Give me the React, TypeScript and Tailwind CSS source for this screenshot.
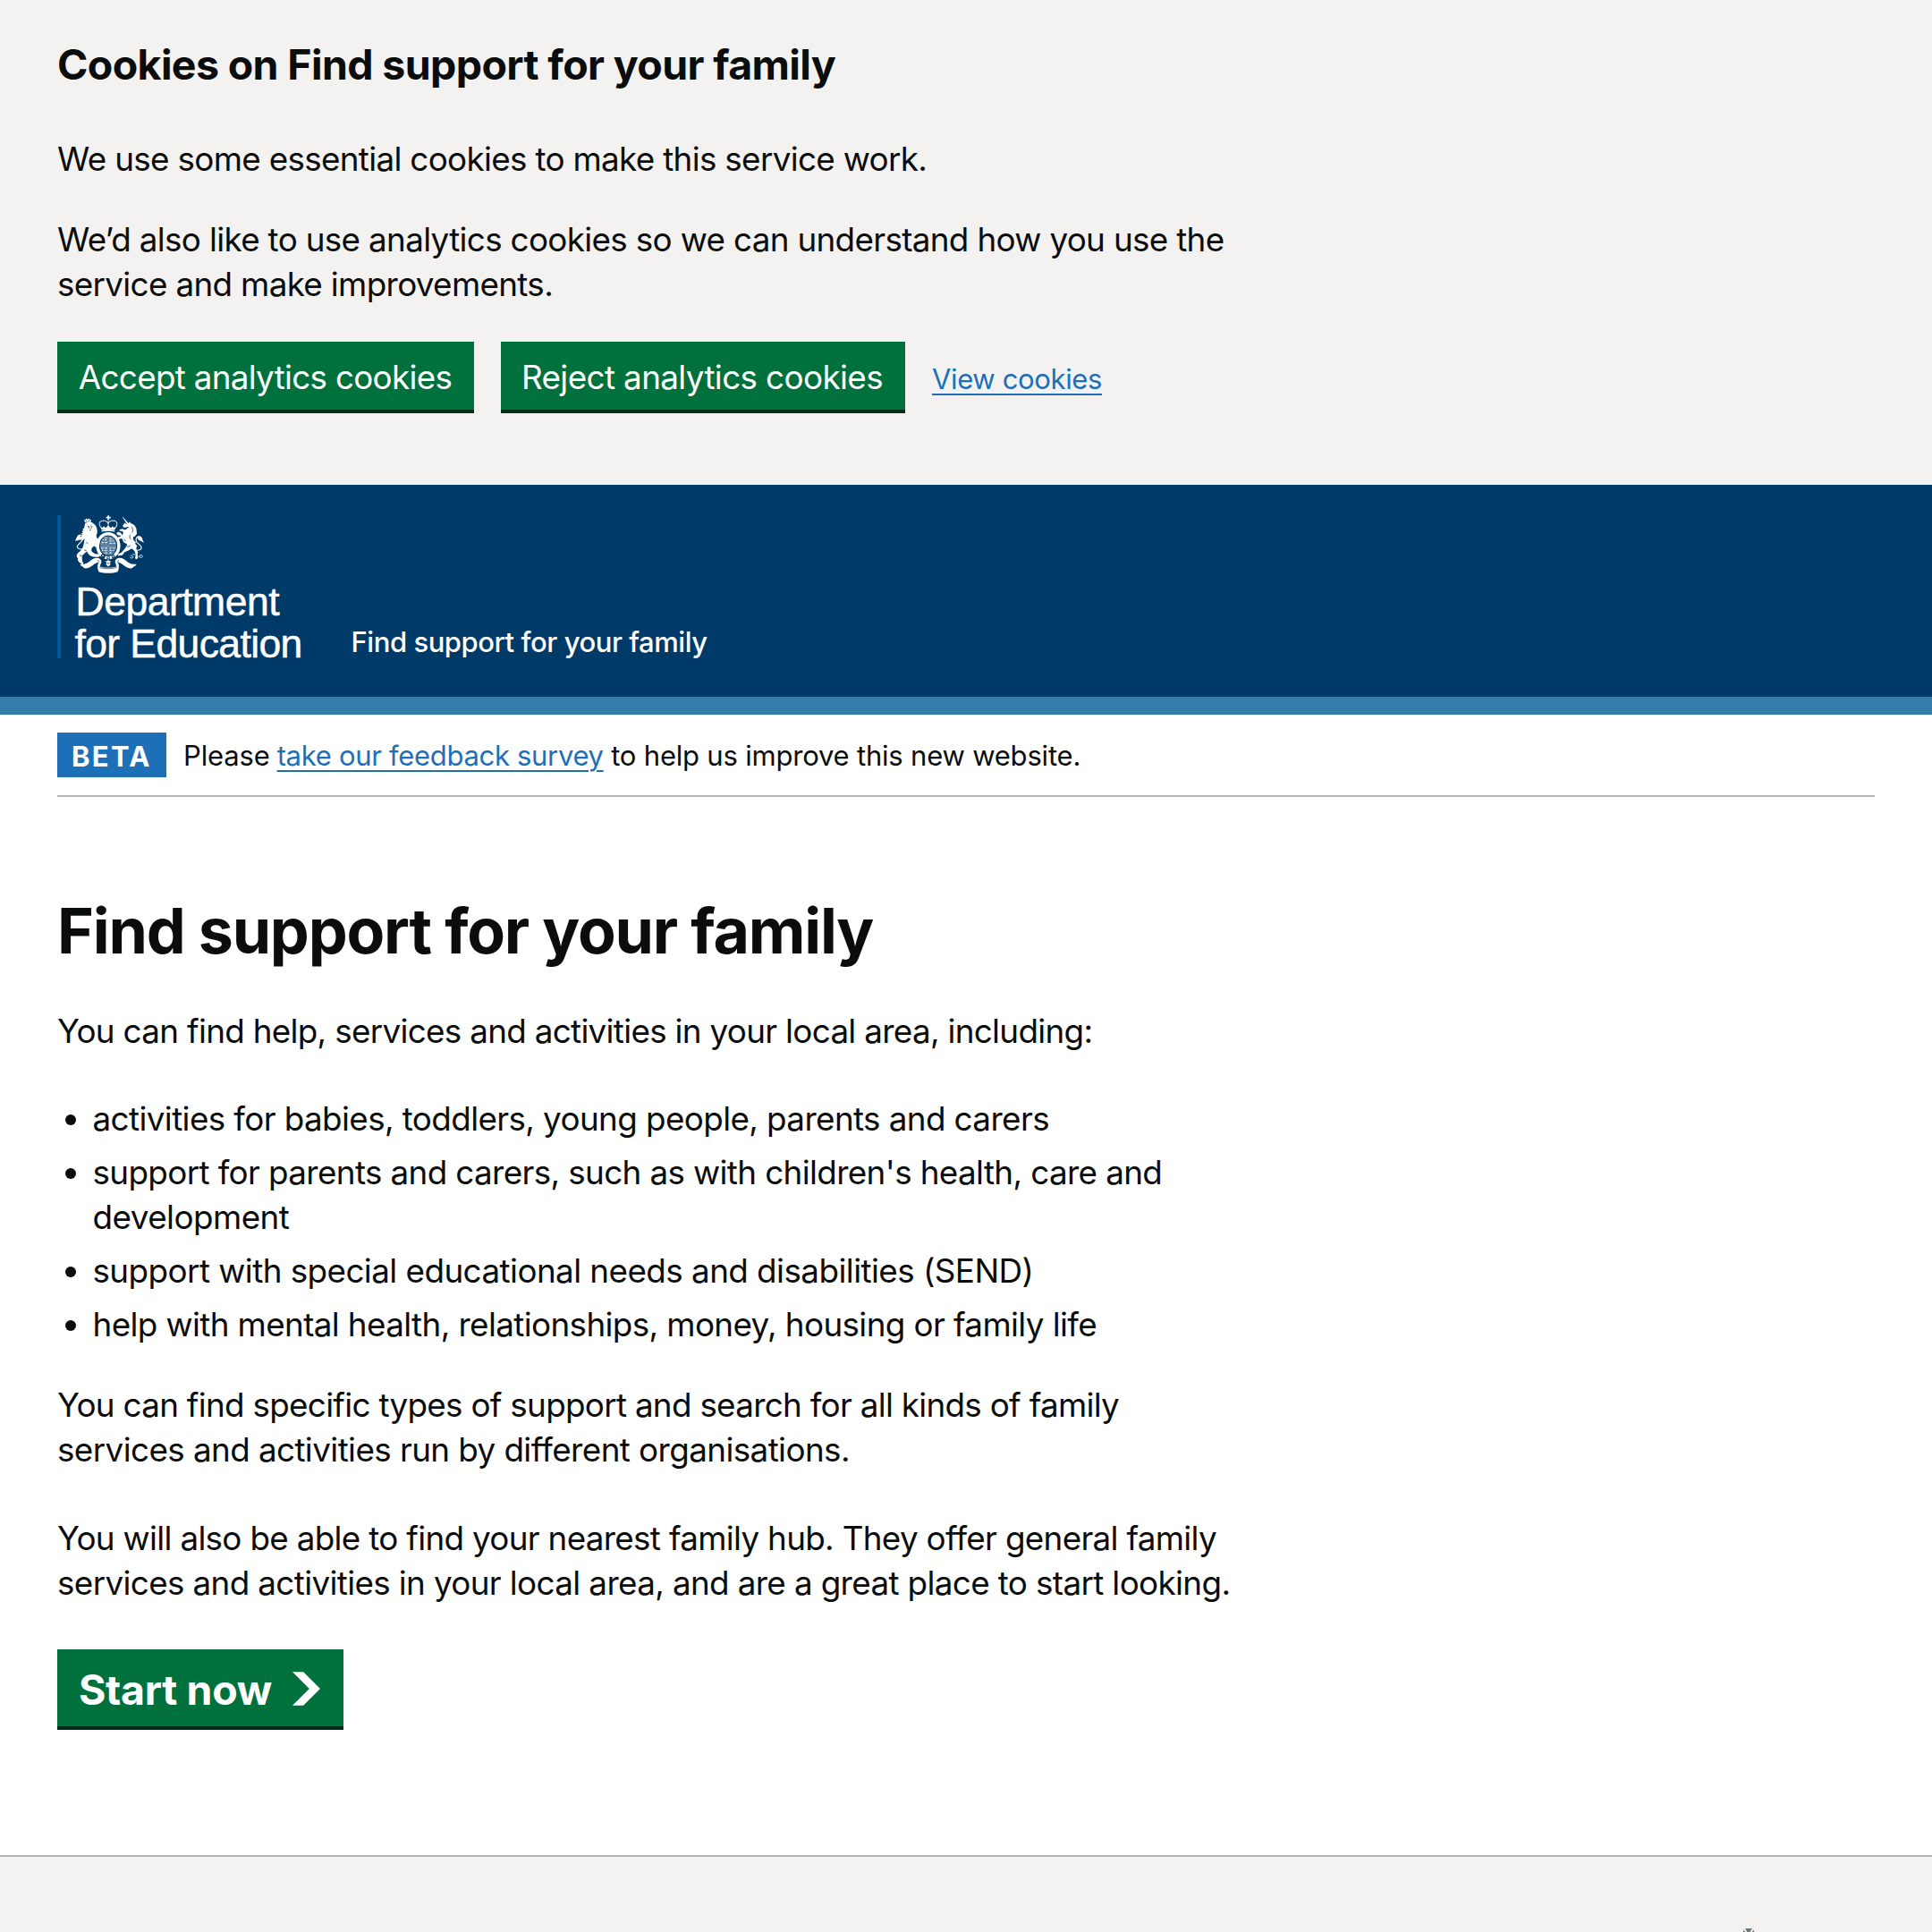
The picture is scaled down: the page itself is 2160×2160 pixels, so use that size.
import type { ReactNode } from "react";

function RoyalArms({ className }: { className?: string }) {
  return (
    <svg viewBox="130 138 234 194" className={className} fill="#fff" stroke="none" aria-hidden="true">
      {/* crown */}
      <path d="M242 138h5v5h5v5h-5v6h-5v-6h-5v-5h5z" />
      <g fill="none" stroke="#fff" strokeWidth="3.2">
        <path d="M224 184c-8-8-12-16-8-23 4-6 13-6 19-4 5 2 8 5 9 9 1-4 4-7 9-9 6-2 15-2 19 4 4 7 0 15-8 23" strokeDasharray="5 1.2" />
        <path d="M244 158v24" strokeDasharray="3 1.5" />
      </g>
      <path d="M219 176l6 4 4-6 6 6 9-8 9 8 6-6 4 6 6-4-3 10h-44z" />
      <path d="M222 188c14-3 30-3 44 0v5c-14-3-30-3-44 0z" />
      {/* garter and shield */}
      <ellipse cx="244" cy="240" rx="35.5" ry="40.5" fill="none" stroke="#fff" strokeWidth="10.5" />
      <ellipse cx="244" cy="240" rx="27" ry="32" fill="#6c8eaa" />
      <path
        d="M226 220h14M223 229h18M230 213h10M249 216h12M249 224h16M249 232h19M221 248h19M223 256h17M229 264h11M249 248h18M249 256h15M249 264h9"
        stroke="#fff"
        strokeWidth="3"
        strokeDasharray="5 2"
      />
      <path d="M231 212v24M259 212v24M230 245v20M258 245v20" stroke="#003a69" strokeWidth="1.6" />
      <path d="M244 208v64M217 240h54" stroke="#003a69" strokeWidth="4" />
      <path d="M244 208v64M217 240h54" stroke="#fff" strokeWidth="1.4" />
      {/* lion */}
      <path d="M166 166c5-6 22-7 28-1 7 4 11 10 12 18 2 8 2 15-2 22l2 10 8 3 2 9-3 18-6 2-11-6-6 5c-4 7-3 12 2 16l8 5 12 1 5 5-5 5h-14l-12-3-9-8-4-8-8 6c-6 5-9 9-9 14l1 12 4 8-3 4-12-8-5-8 2-4-5-7c0-8 5-13 11-17 6-6 10-13 12-22l4-20-8 5-5-3-4 3-1-8 8-6 4-1-5-2 4-3-5-3 6-3-3-6 5-1-3-6 5-2z" />
      <path d="M163 151l4 3 3-6 5 4 5-4 3 6 4-3-2 11-10-2-9 2z" />
      <path d="M168 157h4M177 156h5" stroke="#003a69" strokeWidth="2.4" />
      <path d="M174 174l6 2-1 6M186 172l3 6-3 4M181 188l5-2M170 228l6 5M164 254l7 3M148 272l8 2" fill="none" stroke="#003a69" strokeWidth="2.6" />
      <path d="M164 250c-12 4-25 0-24-8 1-7 14-13 18-22 3-9-2-17-9-16-6 1-8 5-6 10" fill="none" stroke="#fff" strokeWidth="3.4" />
      <path d="M132 223l3-4c3-9 7-15 15-14l3 8c-4 7-9 10-17 10z" />
      {/* unicorn */}
      <path d="M291 143l3 1 22 25-5 5z" />
      <path d="M305 168l6-3 4-5 6 5c10 3 18 12 18 23l1 12-6 8-6 2c-1 5 0 9 3 14l6 4-3 5 7 7-3 6 1 8 5 7-2 9 2 10-4 5-6-3 2-12-3-10-7-9-5-1-8 5-14 6-7 10-14 3-2-5 12-6 12-14 8-12-2-3-10-6-6-12-6 0-8 7-5-6 7-7 7 0 1-4-9-1-6-7 6-5 10 4 4 8 4-10-4-4-8 0-2-5 11-3 7 4 8-4 4-6-6 1-9 1-4-6 8-10z" />
      <path d="M308 178l6 1M322 176c5 8 6 13 2 20M318 204c-4 6-2 10 2 15M296 218l7 7M308 244l10-4" fill="none" stroke="#003a69" strokeWidth="2.4" />
      <path d="M331 253c11 4 23 2 24-5 2-9-11-14-16-21-4-8-1-17 6-17" fill="none" stroke="#fff" strokeWidth="3.4" />
      <path d="M343 208c10-2 15 4 17 14l4 8-9-5-10-5-3-6z" />
      {/* chain */}
      <path d="M318 275c4-4 10-2 9 3s-8 5-9 0M347 276c0-5 10-7 12-2s-9 8-12 2M326 268l8 2" fill="none" stroke="#fff" strokeWidth="2.4" />
      {/* pendant and ribbon */}
      <path d="M219 270l8-4 8 8-4 10-9-4zM239 277h10v9h-10zM254 274l9-5 5 7-10 8z" fill="#003a69" />
      <path d="M223 272l6 2M241 281h6M257 277l7-3" stroke="#fff" strokeWidth="3" />
      <path d="M244 286l3 5 7 1-5 5 3 5-8 9-8-9 3-5-5-5 7-1z" />
      <circle cx="244" cy="299" r="2.4" fill="#003a69" />
      <path d="M155 301c9 2 16-1 24-7 9-7 17-13 27-13 9 0 15 5 15 12 0 6-4 11-5 17 18 5 38 5 56 0-1-6-5-11-5-17 0-7 6-12 15-12 10 0 18 6 27 13 8 6 15 9 24 7l6 3-17 12c-11 0-19-4-27-11-8-6-13-9-18-8 4 8 4 20-1 30-20 6-44 6-64 0-5-10-5-22-1-30-5-1-10 2-18 8-8 7-16 11-27 11l-17-12z" />
      <path d="M209 288c4 3 3 8 0 12M279 288c-4 3-3 8 0 12M215 313c18 5 40 5 58 0" fill="none" stroke="#003a69" strokeWidth="2" />
    </svg>
  );
}

/* One visual line of running text with its own tracking. */
function Line({ className, children }: { className: string; children: ReactNode }) {
  return <span className={`block whitespace-nowrap ${className}`}>{children}</span>;
}

function Item({ children }: { children: ReactNode }) {
  return (
    <li className="flex">
      <span className="mt-5 mr-[18.5px] ml-[9px] size-3 shrink-0 rounded-full bg-[#0b0c0c]" />
      <span>{children}</span>
    </li>
  );
}

function CookieBanner() {
  return (
    <section className="h-[542px] bg-[#f3f2f1] px-16 pt-[42px]">
      <h2 className="text-[46.5px] leading-[60px] font-bold tracking-[-0.63px]">Cookies on Find support for your family</h2>
      <p className="mt-[51px]">
        <Line className="tracking-[-0.67px]">We use some essential cookies to make this service work.</Line>
      </p>
      <p className="mt-10">
        <Line className="tracking-[-0.66px]">We’d also like to use analytics cookies so we can understand how you use the</Line>
        <Line className="tracking-[-0.66px]">service and make improvements.</Line>
      </p>
      <div className="mt-[39px] flex gap-[30px]">
        <button className="h-20 w-[466px] border-b-4 border-[#002d18] bg-[#00703c] pt-1 pr-[1px] text-white tracking-[-0.7px]">Accept analytics cookies</button>
        <button className="h-20 w-[452px] border-b-4 border-[#002d18] bg-[#00703c] pt-1 pr-[2px] text-white tracking-[-0.61px]">Reject analytics cookies</button>
        <a className="mt-[17px] text-[31px] text-[#1d70b8] underline decoration-2 underline-offset-[5px] tracking-[-0.36px]">View cookies</a>
      </div>
    </section>
  );
}

function Header() {
  return (
    <header className="flex h-[257px] border-b-[20px] border-[#347ca9] bg-[#003a69] px-16 pt-[34px] text-white">
      <div className="h-40 w-[329px] border-l-4 border-[#005a9f] pl-[15px]">
        <RoyalArms className="h-[65px] w-[78px]" />
        <div className="mt-[8px] font-['Liberation_Sans',Arial,sans-serif] text-[44.5px] leading-[47px] [-webkit-text-stroke:0.5px_white]">
          <div className="pl-[1.5px] tracking-[-0.5px]">Department</div>
          <div className="pl-[0.5px] tracking-[-0.62px]">for Education</div>
        </div>
      </div>
      <span className="mt-[117px] ml-[-0.5px] text-[31px] leading-[50px] font-medium tracking-[-0.45px]">Find support for your family</span>
    </header>
  );
}

export default function App() {
  return (
    <div className="h-[2160px] w-[2160px] overflow-hidden bg-white font-[Inter,sans-serif] text-[36.8px] leading-[50px] text-[#0b0c0c]">
      <CookieBanner />
      <Header />
      <main className="h-[1275px] px-16">
        <div className="flex h-[92px] border-b-2 border-[#b1b4b6] pt-5 text-[31px]">
          <strong className="h-[50px] w-[122px] bg-[#1d70b8] pt-[2px] pl-4 font-bold text-white tracking-[2.3px]">BETA</strong>
          <p className="ml-[19px] flex whitespace-nowrap pt-[1px]">
            <span className="mr-[8px] tracking-[-0.15px]">Please</span>
            <a className="mr-[8.5px] text-[#1d70b8] underline decoration-2 underline-offset-[5px] tracking-[-0.31px]">take our feedback survey</a>
            <span className="tracking-[-0.2px]">to help us improve this new website.</span>
          </p>
        </div>
        <h1 className="mt-[110px] text-[69.8px] leading-[80px] font-bold tracking-[-1.22px]">Find support for your family</h1>
        <p className="mt-[47px]">
          <Line className="tracking-[-0.685px]">You can find help, services and activities in your local area, including:</Line>
        </p>
        <ul className="mt-12 flex flex-col gap-[10px]">
          <Item>
            <Line className="tracking-[-0.6px]">activities for babies, toddlers, young people, parents and carers</Line>
          </Item>
          <Item>
            <Line className="tracking-[-0.62px]">support for parents and carers, such as with children's health, care and</Line>
            <Line className="tracking-[-0.53px]">development</Line>
          </Item>
          <Item>
            <Line className="tracking-[-0.55px]">support with special educational needs and disabilities (SEND)</Line>
          </Item>
          <Item>
            <Line className="tracking-[-0.61px]">help with mental health, relationships, money, housing or family life</Line>
          </Item>
        </ul>
        <p className="mt-10">
          <Line className="tracking-[-0.7px]">You can find specific types of support and search for all kinds of family</Line>
          <Line className="tracking-[-0.58px]">services and activities run by different organisations.</Line>
        </p>
        <p className="mt-[49px]">
          <Line className="tracking-[-0.68px]">You will also be able to find your nearest family hub. They offer general family</Line>
          <Line className="tracking-[-0.625px]">services and activities in your local area, and are a great place to start looking.</Line>
        </p>
        <button className="mt-[49px] flex h-[90px] w-80 items-center border-b-4 border-[#002d18] bg-[#00703c] pt-1 pl-6 text-[46.5px] font-bold text-white tracking-[-0.33px]">
          Start now
          <svg viewBox="0 0 33 40" className="mt-[-3px] ml-[23px] h-[38px] w-[31px]" fill="currentColor" aria-hidden="true">
            <path d="M0 0h13l20 20-20 20H0l20-20z" />
          </svg>
        </button>
      </main>
      <footer className="flex h-[86px] items-end justify-end border-t-2 border-[#b1b4b6] bg-[#f3f2f1] pr-[199px]">
        <svg viewBox="0 0 12 4" className="h-1 w-3" fill="#6f777b" aria-hidden="true">
          <path d="M2 0h8L7.5 4h-3zM0 1.5l2.500 2.500H0zM12 1.500 9.500 4H12z" />
        </svg>
      </footer>
    </div>
  );
}
